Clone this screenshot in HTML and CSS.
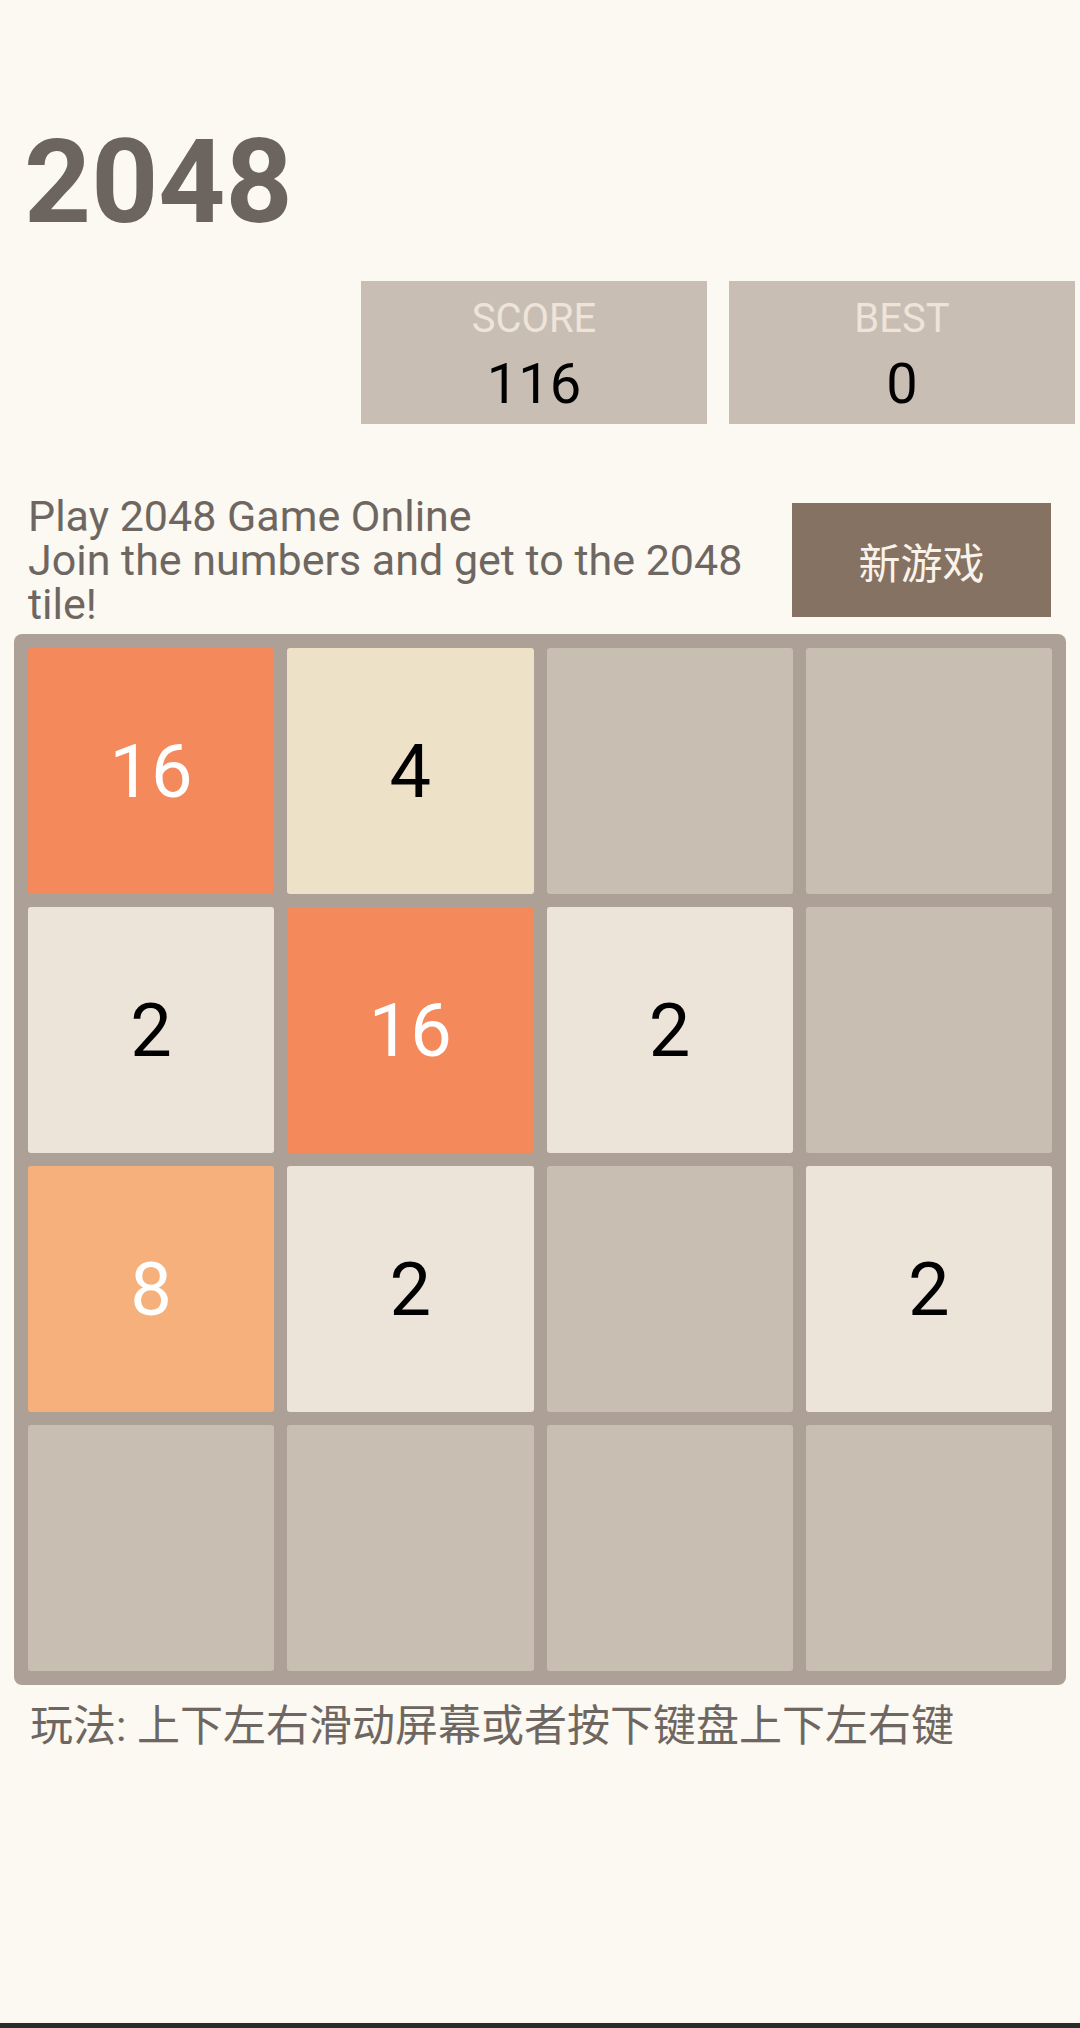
FILE: index.html
```html
<!DOCTYPE html>
<html lang="zh">

<head>
  <meta charset="UTF-8">
  <meta name="viewport" content="width=device-width, initial-scale=1.0">
  <title>2048</title>
  <link rel="stylesheet" href="styles.css">
</head>

<body>
  <div class="header">
    <h1 class="title">2048</h1>
    <div class="scores">
      <div class="score__box">
        <div class="score__label">SCORE</div>
        <div class="score__value">116</div>
      </div>
      <div class="score__box">
        <div class="score__label">BEST</div>
        <div class="score__value">0</div>
      </div>
    </div>
  </div>

  <div class="intro">
    <p class="intro__text">Play 2048 Game Online<br>Join the numbers and get to the 2048 tile!</p>
    <button class="new__game">新游戏</button>
  </div>

  <div class="board">
    <div class="tile tile-16">16</div>
    <div class="tile tile-4">4</div>
    <div class="tile"></div>
    <div class="tile"></div>

    <div class="tile tile-2">2</div>
    <div class="tile tile-16">16</div>
    <div class="tile tile-2">2</div>
    <div class="tile"></div>

    <div class="tile tile-8">8</div>
    <div class="tile tile-2">2</div>
    <div class="tile"></div>
    <div class="tile tile-2">2</div>

    <div class="tile"></div>
    <div class="tile"></div>
    <div class="tile"></div>
    <div class="tile"></div>
  </div>

  <p class="hint">玩法: 上下左右滑动屏幕或者按下键盘上下左右键</p>

  <div class="bottom__bar"></div>
</body>

</html>
```

FILE: styles.css
```css
html,
body {
  margin: 0;
  padding: 0;
}

body {
  background-color: #fcf8f2;
  font-family: Roboto, "Noto Sans CJK SC", sans-serif;
  color: #6e6761;
  display: flex;
  flex-direction: column;
  min-height: 100vh;
}

.header {
  padding: 112px 5px 0 24px;
}

.title {
  margin: 0;
  font-size: 117px;
  line-height: 140px;
  font-weight: 700;
  color: #6c655f;
}

.scores {
  display: flex;
  justify-content: flex-end;
  gap: 22px;
  margin-top: 29px;
}

.score__box {
  width: 346px;
  height: 143px;
  box-sizing: border-box;
  padding-top: 14px;
  background-color: #c8beb3;
  text-align: center;
}

.score__label {
  font-size: 40px;
  line-height: 48px;
  color: #eee4da;
  margin-bottom: 8px;
}

.score__value {
  font-size: 56px;
  line-height: 66px;
  color: #000;
}

.intro {
  display: flex;
  align-items: center;
  justify-content: space-between;
  gap: 20px;
  margin-top: 70px;
  padding: 0 29px 0 28px;
}

.intro__text {
  margin: 0;
  flex: 1;
  font-size: 43px;
  line-height: 44px;
}

.new__game {
  width: 259px;
  height: 114px;
  flex-shrink: 0;
  border: none;
  border-radius: 0;
  background-color: #857262;
  color: #f9f3ea;
  font-family: "Noto Sans CJK SC", sans-serif;
  font-size: 42px;
  cursor: pointer;
}

.board {
  margin: 8px 14px 0 14px;
  padding: 14px;
  display: grid;
  grid-template-columns: repeat(4, 1fr);
  grid-auto-rows: 246px;
  gap: 13px;
  background-color: #ada197;
  border-radius: 8px;
}

.tile {
  display: flex;
  align-items: center;
  justify-content: center;
  background-color: #c9beb2;
  border-radius: 3px;
  font-size: 74px;
  color: #000;
}

.tile-2 {
  background-color: #ece4d9;
}

.tile-4 {
  background-color: #ede1c8;
}

.tile-8 {
  background-color: #f5b07b;
  color: #fff;
}

.tile-16 {
  background-color: #f4895b;
  color: #fff;
}

.hint {
  margin: 17px 0 0 30px;
  font-size: 43px;
  line-height: 48px;
  color: #6e6761;
}

.bottom__bar {
  margin-top: auto;
  height: 5px;
  background-color: #2b2b2b;
}
```
